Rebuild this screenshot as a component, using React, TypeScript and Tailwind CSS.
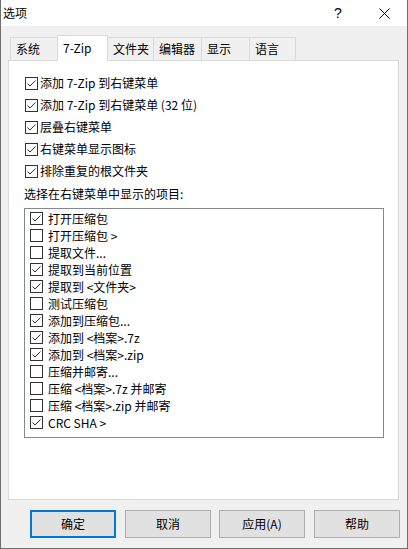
import React from 'react';

const topOptions = [
  '添加 7-Zip 到右键菜单',
  '添加 7-Zip 到右键菜单 (32 位)',
  '层叠右键菜单',
  '右键菜单显示图标',
  '排除重复的根文件夹',
];

const menuItems = [
  { label: '打开压缩包', on: true },
  { label: '打开压缩包 >', on: false },
  { label: '提取文件...', on: false },
  { label: '提取到当前位置', on: true },
  { label: '提取到 <文件夹>', on: true },
  { label: '测试压缩包', on: false },
  { label: '添加到压缩包...', on: true },
  { label: '添加到 <档案>.7z', on: true },
  { label: '添加到 <档案>.zip', on: true },
  { label: '压缩并邮寄...', on: false },
  { label: '压缩 <档案>.7z 并邮寄', on: false },
  { label: '压缩 <档案>.zip 并邮寄', on: false },
  { label: 'CRC SHA >', on: true },
];

const tabs = [
  { label: '系统', w: 'w-[48px]' },
  { label: '7-Zip', w: 'w-[51px]' },
  { label: '文件夹', w: 'w-[47px]' },
  { label: '编辑器', w: 'w-[49px]' },
  { label: '显示', w: 'w-[49px]' },
  { label: '语言', w: 'w-[47px]' },
];

const Check = ({ on }: { on: boolean }) => (
  <div className="w-[13px] h-[13px] shrink-0 border border-[#333333] bg-white flex items-center justify-center">
    {on && (
      <svg width="11" height="11" viewBox="0 0 11 11">
        <polyline points="1.5,5.5 4,8 9.5,2.5" fill="none" stroke="#333333" strokeWidth="1" />
      </svg>
    )}
  </div>
);

export default function App() {
  return (
    <div className="w-[408px] h-[549px] flex flex-col bg-[#f0f0f0] border-x border-b border-[#6e6e6e] text-black text-[12px] leading-[16px] font-['Noto_Sans_CJK_SC',sans-serif]">
      {/* title bar */}
      <div className="h-[26px] shrink-0 bg-white flex items-center pl-[2px]">
        <span>选项</span>
        <div className="ml-auto flex h-full">
          <div className="w-[46px] h-full flex items-center justify-center text-[14px] font-['Liberation_Sans',sans-serif]">?</div>
          <div className="w-[46px] h-full flex items-center justify-center">
            <svg width="11" height="11" viewBox="0 0 11 11">
              <path d="M0.5 0.5 L10.5 10.5 M10.5 0.5 L0.5 10.5" stroke="#000" strokeWidth="1" />
            </svg>
          </div>
        </div>
      </div>

      <div className="flex-1 flex flex-col px-[7px]">
        {/* tabs */}
        <div className="mt-[9px] h-[25px] flex items-end pl-[2px]">
          {tabs.map((t, i) => {
            const sel = t.label === '7-Zip';
            return (
              <div
                key={t.label}
                className={`${t.w} ${i > 0 ? '-ml-px' : ''} border-t border-x border-[#d9d9d9] flex items-center pl-[5px] ${
                  sel ? 'h-[26px] -mb-px bg-white relative z-10 pb-[2px]' : 'h-[23px] bg-[#f0f0f0]'
                }`}
              >
                {t.label}
              </div>
            );
          })}
        </div>

        {/* panel */}
        <div className="w-[391px] h-[440px] shrink-0 border border-[#d9d9d9] bg-white flex flex-col pt-[11px] pl-[15px]">
          {topOptions.map((o) => (
            <div key={o} className="h-[22px] flex items-center gap-[2px] pl-px">
              <Check on />
              <span>{o}</span>
            </div>
          ))}
          <div className="h-[24px] flex items-center">选择在右键菜单中显示的项目:</div>
          <div className="mt-[2px] w-[360px] h-[230px] border border-[#828790] pt-px pl-[5px] flex flex-col">
            {menuItems.map((m) => (
              <div key={m.label} className="h-[17px] flex items-center gap-[5px]">
                <Check on={m.on} />
                <span>{m.label}</span>
              </div>
            ))}
          </div>
        </div>

        {/* buttons */}
        <div className="mt-[10px] flex pl-[22px]">
          <button className="w-[86px] h-[28px] bg-[#e1e1e1] border-2 border-[#0078d7] flex items-center justify-center">确定</button>
          <button className="ml-[9px] w-[86px] h-[28px] bg-[#e1e1e1] border border-[#adadad] flex items-center justify-center">取消</button>
          <button className="ml-[8px] w-[86px] h-[28px] bg-[#e1e1e1] border border-[#adadad] flex items-center justify-center">应用(A)</button>
          <button className="ml-[9px] w-[86px] h-[28px] bg-[#e1e1e1] border border-[#adadad] flex items-center justify-center">帮助</button>
        </div>
      </div>
    </div>
  );
}
